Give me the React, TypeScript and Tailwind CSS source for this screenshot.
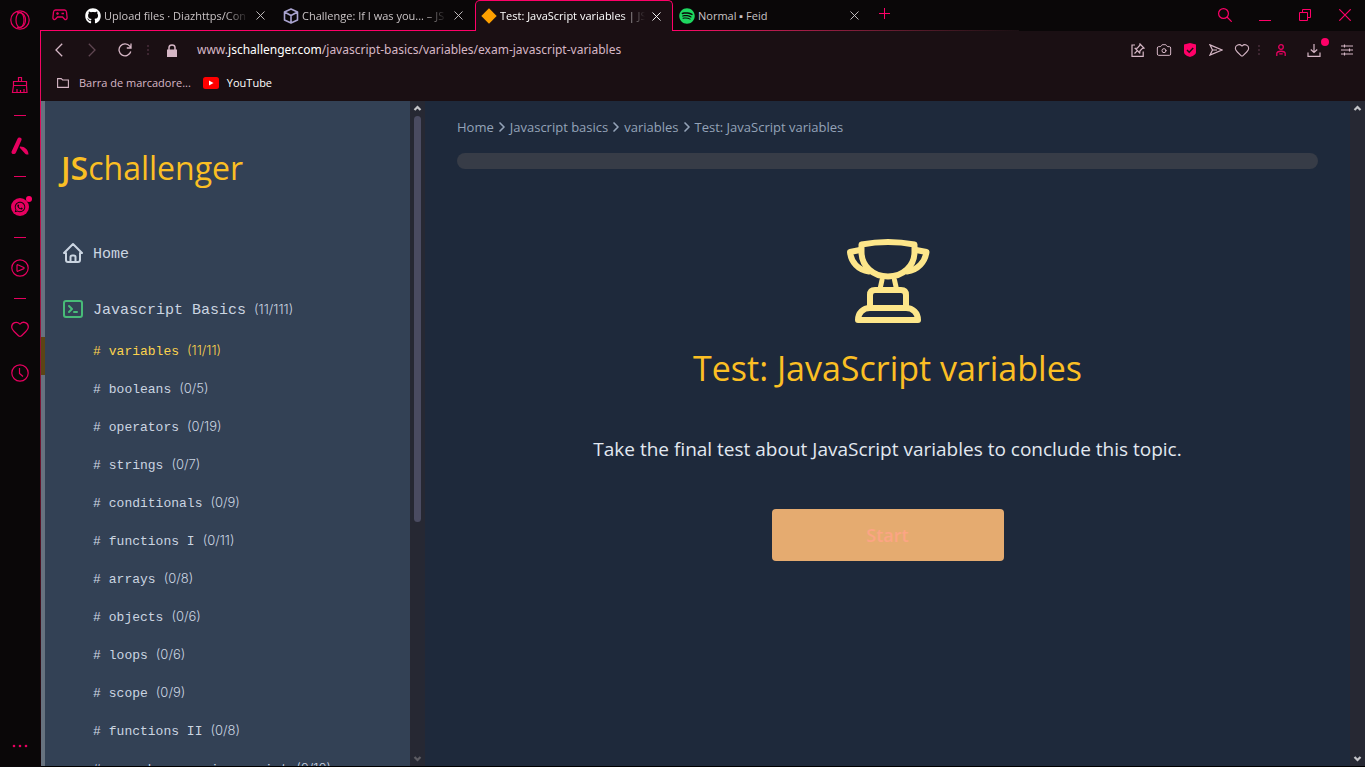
import type { ReactNode } from 'react';
import { FaGithub, FaSpotify, FaWhatsapp } from 'react-icons/fa';
import { Camera, ChevronRight, Heart, X } from 'lucide-react';

const topics: [string, string][] = [
  ['variables', '(11/11)'],
  ['booleans', '(0/5)'],
  ['operators', '(0/19)'],
  ['strings', '(0/7)'],
  ['conditionals', '(0/9)'],
  ['functions I', '(0/11)'],
  ['arrays', '(0/8)'],
  ['objects', '(0/6)'],
  ['loops', '(0/6)'],
  ['scope', '(0/9)'],
  ['functions II', '(0/8)'],
  ['asynchronous javascript', '(0/10)'],
];

function IconButton({ label, className = '', children }: { label: string; className?: string; children: ReactNode }) {
  return (
    <button type="button" aria-label={label} className={`flex shrink-0 items-center justify-center ${className}`}>
      {children}
    </button>
  );
}

function Dots() {
  return (
    <svg className="h-3 w-0.5 shrink-0" viewBox="0 0 2 12" fill="#3d2530" aria-hidden="true">
      <path d="M0 1h2v2H0zM0 5h2v2H0zM0 9h2v2H0z" />
    </svg>
  );
}

function Dash() {
  return (
    <span className="flex h-[21px] items-center">
      <span className="h-px w-3 bg-[#e6005f]" />
    </span>
  );
}

function Rail() {
  return (
    <nav aria-label="Browser sidebar" className="flex w-10 shrink-0 flex-col items-center bg-[#0a0708] text-[#e6005f]">
      <IconButton label="Opera menu" className="h-10 w-10">
        <svg className="h-5 w-5" viewBox="0 0 20 20" fill="none" stroke="currentColor" strokeWidth="1.2">
          <circle cx="10" cy="10" r="9.2" />
          <ellipse cx="10" cy="10" rx="4" ry="7.4" />
          <path d="M7 3C10 1 15.500 4 15.500 10S10 19 7 17" />
        </svg>
      </IconButton>
      <IconButton label="Cleaner" className="mt-[25px] h-10 w-10">
        <svg className="h-[18px] w-[18px]" viewBox="0 0 18 18" fill="none" stroke="currentColor" strokeWidth="1.2">
          <path d="M7.500 5.500V1.500h3v4M2.500 5.500h13v4h-13zM2.500 9.500l-1 7h14.500l-.5-7M6 16.500V13M9.500 16.500V14M13 16.500V13" />
        </svg>
      </IconButton>
      <Dash />
      <IconButton label="Aria" className="h-10 w-10">
        <svg className="h-[18px] w-[18px]" viewBox="0 0 18 18" fill="currentColor">
          <path d="M8.500.500c1.500 0 2.500 1.200 2 2.500L5 15.500c-1 2.500-5 2-4.500-.8L6.500 1.800C7 1 7.500.500 8.500.500zM9.500 9.500c4 0 8 3 8 8-1.500.3-3-.2-4-1.500l-4.500-5c-.5-.8-.2-1.500.5-1.500z" />
        </svg>
      </IconButton>
      <Dash />
      <IconButton label="WhatsApp" className="h-10 w-10">
        <span className="relative flex h-[18px] w-[18px] items-center justify-center rounded-full bg-current">
          <FaWhatsapp className="h-3 w-3 text-[#0a0708]" />
          <span className="absolute -right-[3px] -top-0.5 h-1.5 w-1.5 rounded-full bg-[#ff0068]" />
        </span>
      </IconButton>
      <Dash />
      <IconButton label="Player" className="h-10 w-10">
        <svg className="h-[18px] w-[18px]" viewBox="0 0 18 18" fill="none" stroke="currentColor" strokeWidth="1.200">
          <circle cx="9" cy="9" r="8.200" />
          <path d="M6 6.200v5.600c0 .5.400.600.800.500l6-2.700c.5-.3.500-.8 0-1.100l-6-2.700c-.4-.2-.8 0-.8.400z" />
        </svg>
      </IconButton>
      <Dash />
      <IconButton label="Favourites" className="h-10 w-10">
        <Heart size={20} strokeWidth={1.5} />
      </IconButton>
      <IconButton label="History" className="mt-1 h-10 w-10">
        <svg className="h-[18px] w-[18px]" viewBox="0 0 18 18" fill="none" stroke="currentColor" strokeWidth="1.200">
          <circle cx="9" cy="9" r="8.200" />
          <path d="M8.500 4v5.500l3.500 3" />
        </svg>
      </IconButton>
      <IconButton label="More" className="mt-auto h-[42px] w-10">
        <svg className="h-1 w-4" viewBox="0 0 16 4" fill="currentColor">
          <circle cx="2" cy="2" r="1.300" />
          <circle cx="8" cy="2" r="1.300" />
          <circle cx="14" cy="2" r="1.300" />
        </svg>
      </IconButton>
    </nav>
  );
}

function Tab({ icon, title, active = false, fade = true }: { icon: ReactNode; title: string; active?: boolean; fade?: boolean }) {
  return (
    <div
      className={`flex h-[31px] w-[198px] shrink-0 items-center border-[#ff0068] ${
        active ? 'rounded-t-[5px] border-x border-t bg-[#1a0f13] pl-[5px] text-white' : 'border-b pl-1.5 pt-px text-[#c9c3c5]'
      }`}
    >
      <span className="flex h-4 w-4 shrink-0 items-center justify-center">{icon}</span>
      <span
        className={`ml-[3px] w-[148px] whitespace-nowrap text-[11px] leading-4 ${
          fade ? '[mask-image:linear-gradient(to_right,black_82%,transparent_98%)]' : ''
        }`}
      >
        {title}
      </span>
      <IconButton label={`Close ${title}`} className="h-4 w-4">
        <X size={15} strokeWidth={1.500} />
      </IconButton>
    </div>
  );
}

function TabStrip() {
  return (
    <header className="flex h-[31px] shrink-0 bg-[#0a0708]">
      <div className="flex w-[39px] shrink-0 items-center justify-center border-b border-[#ff0068]">
        <IconButton label="GX corner" className="text-[#e6005f]">
          <svg className="h-3 w-4" viewBox="0 0 16 12" fill="none" stroke="currentColor" strokeWidth="1.300">
            <path d="M3.500 1h9c1.200 0 1.800.8 2 2l.6 5.500c.2 2-1.600 2.700-2.700 1.500L10.500 8h-5l-1.900 2C2.500 11.200.7 10.500.9 8.500L1.500 3c.2-1.200.8-2 2-2z" />
            <path d="M4.200 4.500h2.600M5.500 3.200v2.600M9.500 4.500h2.500" />
          </svg>
        </IconButton>
      </div>
      <Tab icon={<FaGithub size={16} className="text-white" />} title="Upload files · Diazhttps/Con" />
      <Tab
        icon={
          <svg className="h-4 w-4" viewBox="0 0 16 16" fill="none" stroke="#a9a3cf" strokeWidth="1.600" strokeLinejoin="round">
            <path d="M8 1l6.500 3v8L8 15l-6.500-3V4zM1.500 4L8 7.500 14.500 4M8 7.500V15" />
          </svg>
        }
        title="Challenge: If I was you... – JS"
      />
      <Tab
        active
        icon={
          <svg className="h-4 w-4" viewBox="0 0 16 16" fill="#ffa000">
            <path d="M8 .3L15.700 8 8 15.700.3 8z" />
          </svg>
        }
        title="Test: JavaScript variables | JS"
      />
      <div className="flex min-w-0 flex-1 flex-col">
        <div className="flex flex-1 items-center">
          <div className="-mb-px">
            <Tab icon={<FaSpotify size={16} className="text-[#1ed760]" />} title="Normal ▪ Feid" fade={false} />
          </div>
          <IconButton label="New tab" className="ml-1 h-5 w-5 text-[#ff0068]">
            <svg className="mb-0.5 h-3 w-3" viewBox="0 0 12 12" stroke="currentColor">
              <path d="M5.500 0v11M0 5.500h11" />
            </svg>
          </IconButton>
          <div className="ml-auto flex text-[#ff0068]">
            <IconButton label="Search tabs" className="h-7 w-10">
              <svg className="h-3.5 w-3.5" viewBox="0 0 14 14" fill="none" stroke="currentColor" strokeWidth="1.200">
                <circle cx="5.500" cy="5.500" r="4.900" />
                <path d="M9 9l4.700 4.700" />
              </svg>
            </IconButton>
            <IconButton label="Minimize" className="h-7 w-10">
              <svg className="h-3 w-3" viewBox="0 0 12 12" stroke="currentColor">
                <path d="M0 11.500h12" />
              </svg>
            </IconButton>
            <IconButton label="Restore" className="h-7 w-10">
              <svg className="h-3 w-3" viewBox="0 0 12 12" fill="none" stroke="currentColor">
                <path d="M.5 3.500h8v8h-8zM3.500 3.500v-3h8v8h-3" />
              </svg>
            </IconButton>
            <IconButton label="Close window" className="h-7 w-10">
              <svg className="h-3 w-3" viewBox="0 0 12 12" fill="none" stroke="currentColor" strokeWidth="1.200">
                <path d="M.3.300l11.400 11.400M11.700.300L.300 11.700" />
              </svg>
            </IconButton>
          </div>
        </div>
        <span className="h-px w-1/2 bg-linear-to-r from-[#ff0068] to-[#1a0f13]" />
      </div>
    </header>
  );
}

function Toolbar() {
  return (
    <div className="shrink-0 bg-[#1a0f13] text-[#d6b7c6]">
      <div className="flex h-[38px] items-center pr-[10px]">
        <IconButton label="Back" className="ml-px h-8 w-[33px]">
          <svg className="h-3.5 w-2" viewBox="0 0 8 14" fill="none" stroke="currentColor" strokeWidth="1.300">
            <path d="M7.200.8L1 7l6.200 6.200" />
          </svg>
        </IconButton>
        <IconButton label="Forward" className="h-8 w-[33px] text-[#5f4651]">
          <svg className="h-3.5 w-2" viewBox="0 0 8 14" fill="none" stroke="currentColor" strokeWidth="1.300">
            <path d="M.8.800L7 7 .8 13.200" />
          </svg>
        </IconButton>
        <IconButton label="Reload" className="h-8 w-[33px]">
          <svg className="h-3.5 w-3.5" viewBox="0 0 14 14" fill="none" stroke="currentColor" strokeWidth="1.300">
            <path d="M12.800 8.500A6 6 0 1 1 11.800 3.200L13 5M13 .500V5H8.800" />
          </svg>
        </IconButton>
        <span className="ml-1.5"><Dots /></span>
        <svg className="ml-[18px] h-[13px] w-2.5" viewBox="0 0 10 13" aria-hidden="true">
          <path d="M0 5.500h10V13H0z" fill="currentColor" />
          <path d="M2 6V3.500C2 0 8 0 8 3.500V6" fill="none" stroke="currentColor" strokeWidth="1.500" />
        </svg>
        <a href="#url" className="ml-5 whitespace-nowrap font-[Noto_Sans,sans-serif] text-[12px] leading-5">
          www.<span className="text-white">jschallenger.com</span>/javascript-basics/variables/exam-javascript-variables
        </a>
        <div className="ml-auto flex items-center">
          <IconButton label="Edit page" className="h-6 w-[26px]">
            <svg className="h-3.5 w-3.5" viewBox="0 0 14 14" fill="none" stroke="currentColor" strokeWidth="1.200">
              <path d="M4 2H1v11.400h11.200V8.500M9 1l4 4-1.500.3-2.500 2.600-.3 2-4.400-4.400 2-.3L8.700 2.500zM6.200 7.800L3.500 10.500" />
            </svg>
          </IconButton>
          <IconButton label="Snapshot" className="h-6 w-[26px]">
            <Camera size={16} strokeWidth={1.500} />
          </IconButton>
          <IconButton label="Ad blocker" className="h-6 w-[26px]">
            <svg className="h-3.5 w-3" viewBox="0 0 12 14">
              <path d="M6 0l6 1.500V9c0 2.500-3 4-6 5-3-1-6-2.500-6-5V1.500z" fill="#ff0068" />
              <path d="M3 7l2.200 2.200L9.200 5" fill="none" stroke="#1a0f13" strokeWidth="1.500" />
            </svg>
          </IconButton>
          <IconButton label="Send" className="h-6 w-[26px]">
            <svg className="h-3 w-3.5" viewBox="0 0 14 12" fill="none" stroke="currentColor" strokeWidth="1.200">
              <path d="M1 .9L13 6 1 11.100 3.500 6zM3.500 6H8" />
            </svg>
          </IconButton>
          <IconButton label="Bookmark" className="h-6 w-[26px]">
            <Heart size={16} strokeWidth={1.600} />
          </IconButton>
          <span className="mx-[3px]"><Dots /></span>
          <IconButton label="Profile" className="ml-1.5 h-6 w-6 text-[#e6005f]">
            <svg className="h-3 w-2.5" viewBox="0 0 10 12" fill="none" stroke="currentColor" strokeWidth="1.300">
              <circle cx="5" cy="3" r="2.300" />
              <path d="M.8 12V9.500C.8 6.500 9.200 6.500 9.200 9.500V12M3.300 9.800h3.400" />
            </svg>
          </IconButton>
          <IconButton label="Downloads" className="ml-[9px] h-6 w-6">
            <span className="relative">
              <svg className="h-3.5 w-3.5" viewBox="0 0 14 14" fill="none" stroke="currentColor" strokeWidth="1.200">
                <path d="M7 1v8M3.800 6.500L7 9.500l3.200-3M1 9.500v3.900h12V9.500" />
              </svg>
              <span className="absolute -right-2 -top-[5px] h-2 w-2 rounded-full bg-[#ff0068]" />
            </span>
          </IconButton>
          <IconButton label="Easy setup" className="ml-[13px] h-6 w-4">
            <svg className="h-3 w-3" viewBox="0 0 12 12" stroke="currentColor" strokeWidth="1.100">
              <path d="M0 2h12M0 6h12M0 10h12M3.500.500v3M8.500 4.500v3M3.500 8.500v3" />
            </svg>
          </IconButton>
        </div>
      </div>
      <div className="flex h-8 items-center pb-1 pl-4 text-[11px] leading-4">
        <a href="#bookmarks" className="flex items-center gap-2.5">
          <svg className="h-2.5 w-3" viewBox="0 0 12 10" fill="none" stroke="currentColor" strokeWidth="1.100">
            <path d="M.6 9.400V.6h3.600L5.600 2h5.800v7.400z" />
          </svg>
          Barra de marcadore...
        </a>
        <a href="#youtube" className="ml-3 flex items-center gap-2 text-white">
          <svg className="h-3 w-4" viewBox="0 0 16 12">
            <rect width="16" height="12" rx="2.500" fill="#f00" />
            <path d="M6 3.500L10.500 6 6 8.500z" fill="#fff" />
          </svg>
          YouTube
        </a>
      </div>
    </div>
  );
}

function Arrow({ down = false, dim = false }: { down?: boolean; dim?: boolean }) {
  return (
    <svg className={`h-[15px] w-[15px] shrink-0 ${dim ? 'text-[#5c5c63]' : 'text-[#c4c4c8]'}`} viewBox="0 0 15 15" fill="none" stroke="currentColor" strokeWidth="2.200" aria-hidden="true">
      <path d={down ? 'M4.500 6L7.500 9l3-3' : 'M4.500 9L7.500 6l3 3'} />
    </svg>
  );
}

function Sidebar() {
  return (
    <aside className="flex w-[384px] shrink-0">
      <nav aria-label="Topics" className="flex min-w-0 flex-1 flex-col overflow-hidden bg-[#334155] text-[#cbd5e1]">
        <div className="shrink-0 border-l-4 border-[#67727f] pb-[43px] pl-4 pt-[45px]">
          <a href="#top" className="block text-[32px] leading-[44px] text-[#fbbf24]">
            <b className="font-semibold">JS</b>challenger
          </a>
        </div>
        <a href="#home" className="flex h-14 shrink-0 items-start gap-2 border-l-4 border-[#67727f] pl-4 pt-2 font-[Liberation_Mono,monospace] text-[15px] leading-7">
          <svg className="h-6 w-6" viewBox="0 0 24 24" fill="none" stroke="currentColor" strokeWidth="2" strokeLinejoin="round" strokeLinecap="round">
            <path d="M3 12l9-9 9 9h-2v7a2 2 0 0 1-2 2H7a2 2 0 0 1-2-2v-7z" />
            <path d="M9.500 21v-5a1.500 1.500 0 0 1 1.500-1.500h2a1.500 1.500 0 0 1 1.500 1.500v5" />
          </svg>
          Home
        </a>
        <a href="#basics" className="flex h-12 shrink-0 items-start gap-2 border-l-4 border-[#67727f] pl-4 pt-2 font-[Liberation_Mono,monospace] text-[15px] leading-6">
          <svg className="h-6 w-6 text-[#48bb78]" viewBox="0 0 24 24" fill="none" stroke="currentColor" strokeWidth="2" strokeLinejoin="round" strokeLinecap="round">
            <rect x="3" y="4" width="18" height="16" rx="2" />
            <path d="M8 9l3 3-3 3M13 15h3" />
          </svg>
          <span className="flex items-baseline gap-2">
            <span>Javascript Basics</span>
            <span className="font-[Inter,sans-serif] text-[13px] font-light">(11/111)</span>
          </span>
        </a>
        <ul className="shrink-0">
          {topics.map(([name, count], i) => (
            <li key={name} className={`flex h-[38px] border-l-4 ${i === 0 ? 'border-[#5c4515]' : 'border-[#67727f]'}`}>
              <a
                href="#topic"
                className={`flex flex-1 items-baseline gap-2 pl-12 pt-px font-[Liberation_Mono,monospace] text-[13px] leading-6 ${i === 0 ? 'text-[#fcd34d]' : ''}`}
              >
                <span>#</span>
                <span>{name}</span>
                <span className="font-[Inter,sans-serif] font-light">{count}</span>
              </a>
            </li>
          ))}
        </ul>
      </nav>
      <div className="flex w-[15px] shrink-0 flex-col items-center bg-[#262833]">
        <Arrow />
        <span className="h-[61%] w-[7px] rounded-full bg-[#4a4b61]" />
        <span className="flex-1" />
        <Arrow down dim />
      </div>
    </aside>
  );
}

function Trophy() {
  return (
    <svg className="mt-16 h-24 w-24" viewBox="840 233 96 96" fill="none" stroke="#fde68a" strokeWidth="6" strokeLinejoin="round" strokeLinecap="round" aria-hidden="true">
      <path d="M861.500 244.500Q888 239.500 914.500 244.500V252C914.500 266 903 276.500 888 276.500S861.500 266 861.500 252Z" />
      <path d="M860 250L850 252C851 262 858 270 869 271.500M916 250L926.500 252C925 262 918 270 907 271.500" />
      <path d="M882 280L880 289M894.500 280L896.500 289" strokeWidth="5" />
      <path d="M870 307.500V295Q870 290 875 290H901Q906 290 906 295V307.500" />
      <path d="M858 320C858 313 863 308 870 308H906C913 308 918 313 918 320Z" />
    </svg>
  );
}

function Main() {
  const crumbs = ['Home', 'Javascript basics', 'variables', 'Test: JavaScript variables'];
  return (
    <main className="flex min-w-0 flex-1 flex-col px-8 pt-4">
      <nav aria-label="Breadcrumb" className="flex items-center text-[13px] leading-5 text-[#94a3b8]">
        {crumbs.map((c, i) => (
          <span key={c} className="flex items-center">
            {i > 0 && <ChevronRight size={16} strokeWidth={2.500} />}
            <a href="#crumb">{c}</a>
          </span>
        ))}
      </nav>
      <div role="progressbar" aria-label="Progress" aria-valuenow={0} className="mt-4 h-4 rounded-full bg-[#373c47]" />
      <div className="flex flex-col items-center text-center">
        <Trophy />
        <h1 className="mt-[15px] text-[34px] leading-[48px] text-[#fbbf24]">Test: JavaScript variables</h1>
        <p className="mt-[43px] text-[19px] leading-7 text-[#e2e8f0]">
          Take the final test about JavaScript variables to conclude this topic.
        </p>
        <button type="button" className="mt-[46px] h-[52px] w-[232px] rounded bg-[#e5ab70] text-[18px] font-semibold leading-7 text-[#fca584]">
          Start
        </button>
      </div>
    </main>
  );
}

export default function App() {
  return (
    <div className="flex h-screen overflow-hidden bg-[#0a0708] font-[Open_Sans,sans-serif]">
      <Rail />
      <div className="flex min-w-0 flex-1 flex-col">
        <TabStrip />
        <div className="flex min-h-0 flex-1">
          <span className="w-px shrink-0 bg-linear-to-b from-[#ff0068] to-[#12060a]" />
          <div className="flex min-w-0 flex-1 flex-col">
            <Toolbar />
            <div className="flex min-h-0 flex-1 border-b border-black bg-[#1e293b]">
              <Sidebar />
              <Main />
              <div className="flex w-[15px] shrink-0 flex-col items-center justify-between bg-[#262833]">
                <Arrow />
                <Arrow down />
              </div>
            </div>
          </div>
        </div>
      </div>
    </div>
  );
}
